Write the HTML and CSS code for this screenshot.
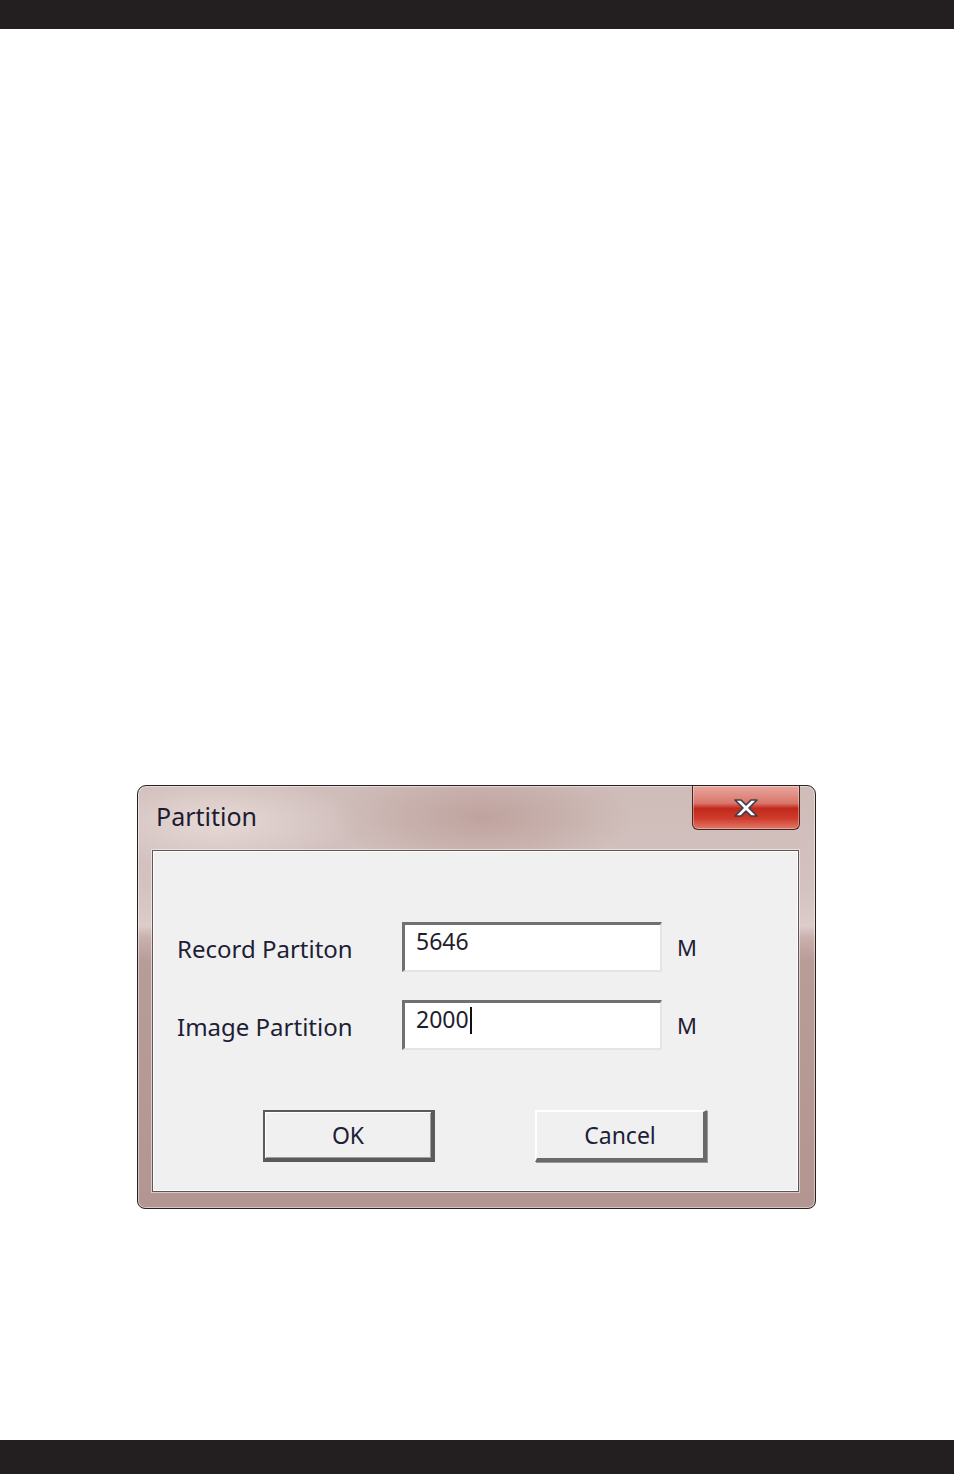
FILE: index.html
```html
<!DOCTYPE html>
<html>
<head>
<meta charset="utf-8">
<link rel="stylesheet" href="styles.css">
</head>
<body>
<div class="page">
  <div class="bar bar-top"></div>
  <main class="stage">
    <section class="dialog">
      <header class="titlebar">
        <span class="title">Partition</span>
        <button class="close" aria-label="Close">
          <svg width="30" height="22" viewBox="0 0 30 22">
            <path d="M4 3 H10 L15 8 L20 3 H26 L18 11 L26 19 H20 L15 14 L10 19 H4 L12 11 Z" fill="#fff" stroke="#3c3c4a" stroke-width="1.6" stroke-linejoin="round"/>
          </svg>
        </button>
      </header>
      <div class="client">
        <div class="fields">
          <label class="label">Record Partiton</label>
          <div class="input"><span>5646</span></div>
          <span class="unit">M</span>
          <label class="label">Image Partition</label>
          <div class="input"><span>2000</span><span class="caret"></span></div>
          <span class="unit">M</span>
        </div>
        <div class="buttons">
          <button class="btn btn-default">OK</button>
          <button class="btn">Cancel</button>
        </div>
      </div>
    </section>
  </main>
  <div class="bar bar-bottom"></div>
</div>
</body>
</html>
```

FILE: styles.css
```css
html, body {
  margin: 0;
  padding: 0;
  background: #fff;
}
.page {
  width: 954px;
  height: 1474px;
  display: flex;
  flex-direction: column;
}
.bar {
  background: #231f20;
  flex: none;
}
.bar-top { height: 29px; }
.bar-bottom { height: 34px; }
.stage {
  flex: 1;
  padding: 756px 0 0 137px;
}
.dialog {
  box-sizing: border-box;
  width: 679px;
  height: 424px;
  border: 1.5px solid #2a2020;
  border-radius: 9px 9px 8px 8px;
  background:
    radial-gradient(ellipse 150px 55px at 345px 32px, rgba(175,135,128,0.5), rgba(175,135,128,0) 100%),
    radial-gradient(ellipse 140px 50px at 80px 35px, rgba(245,235,233,0.6), rgba(245,235,233,0) 100%),
    linear-gradient(to bottom, #cebcb9 0px, #d3c2bf 100px, #dcccca 140px, #c8b0ad 152px, #b89c98 175px, #b39692 424px);
  box-shadow: inset 0 0 0 1px rgba(255,255,255,0.45);
  padding: 0 16px 16px 14px;
  display: flex;
  flex-direction: column;
}
.titlebar {
  height: 64px;
  flex: none;
  display: flex;
  align-items: flex-start;
  justify-content: space-between;
}
.title {
  font-family: "Noto Sans", "Open Sans", sans-serif;
  font-size: 25px;
  color: #1c1c30;
  margin: 13px 0 0 4px;
}
.close {
  width: 108px;
  height: 44px;
  margin: 0 -1px 0 0;
  padding: 0;
  border: 1px solid #4a2422;
  border-top: none;
  border-radius: 0 0 6px 6px;
  background: linear-gradient(to bottom, #e8a79e 0%, #d9766b 40%, #c0291c 52%, #cf3a2a 75%, #e07a6a 100%);
  box-shadow: inset 0 0 0 1px rgba(255,255,255,0.35);
  display: flex;
  align-items: center;
  justify-content: center;
}
.client {
  flex: 1;
  background: #f0f0f0;
  border: 1px solid #5e5656;
  box-shadow: 0 0 0 1px rgba(255,255,255,0.5), inset 0 0 0 1px #ffffff;
  padding: 0;
  display: flex;
  flex-direction: column;
}
.fields {
  display: grid;
  grid-template-columns: 210px 260px auto;
  column-gap: 15px;
  row-gap: 28px;
  align-items: center;
  padding: 71px 0 0 24px;
}
.label, .unit {
  font-family: "Noto Sans", "Open Sans", sans-serif;
  font-size: 24px;
  color: #1e1e36;
}
.unit { font-size: 22px; }
.label { position: relative; top: 1px; }
.input {
  box-sizing: border-box;
  height: 50px;
  background: #fff;
  border-style: solid;
  border-width: 3px 2px 2px 3px;
  border-color: #707070 #e4e4e4 #e4e4e4 #707070;
  padding: 1px 0 0 11px;
  font-family: "Noto Sans", "Open Sans", sans-serif;
  font-size: 23px;
  color: #1e1e2e;
  display: flex;
  align-items: flex-start;
  line-height: 30px;
}
.caret {
  width: 2px;
  height: 27px;
  background: #111;
  margin: 3px 0 0 1px;
}
.buttons {
  display: flex;
  gap: 100px;
  padding: 60px 0 0 110px;
}
.btn {
  box-sizing: border-box;
  width: 172px;
  height: 52px;
  background: #f0f0f0;
  border-style: solid;
  border-width: 2px 4px 4px 2px;
  border-color: #ffffff #6a6a6a #6a6a6a #ffffff;
  box-shadow: 1px 1px 0 #9a9a9a;
  font-family: "Noto Sans", "Open Sans", sans-serif;
  font-size: 23px;
  color: #1e1e36;
  padding: 0;
}
.btn-default {
  border-color: #5a5a5a #5a5a5a #5a5a5a #5a5a5a;
  border-width: 2px 4px 4px 2px;
  box-shadow: inset 1px 1px 0 #fff, inset -1px -1px 0 #a0a0a0;
}
```
